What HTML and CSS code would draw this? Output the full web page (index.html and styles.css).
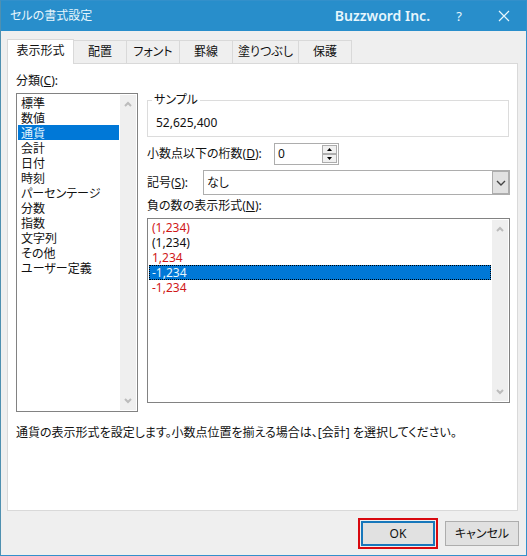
FILE: index.html
```html
<!DOCTYPE html>
<html lang="ja">
<head>
  <meta charset="UTF-8">
  <meta name="viewport" content="width=device-width, initial-scale=1.0">
  <title>セルの書式設定</title>
  <link rel="stylesheet" href="styles.css">
</head>
<body>
  <form class="dialog">
    <!-- Title bar -->
    <header class="titlebar">
      <h1 class="title">セルの書式設定</h1>
      <span class="brand">Buzzword Inc.</span>
      <button type="button" class="help" aria-label="ヘルプ">?</button>
      <button type="button" class="close" aria-label="閉じる">
        <svg width="12" height="12" viewBox="0 0 12 12"><path d="M1 1L11 11M11 1L1 11" fill="none" stroke="currentColor" stroke-width="1.2"/></svg>
      </button>
    </header>

    <!-- Tabs -->
    <nav class="tabs">
      <button type="button" class="tab active">表示形式</button>
      <button type="button" class="tab">配置</button>
      <button type="button" class="tab">フォント</button>
      <button type="button" class="tab">罫線</button>
      <button type="button" class="tab wide">塗りつぶし</button>
      <button type="button" class="tab">保護</button>
    </nav>

    <main class="panel">
      <div class="columns">
        <!-- Category -->
        <div class="category">
          <label for="category">分類(<u>C</u>):</label>
          <div class="listbox">
            <select id="category" name="category" size="12">
              <option>標準</option>
              <option>数値</option>
              <option selected>通貨</option>
              <option>会計</option>
              <option>日付</option>
              <option>時刻</option>
              <option>パーセンテージ</option>
              <option>分数</option>
              <option>指数</option>
              <option>文字列</option>
              <option>その他</option>
              <option>ユーザー定義</option>
            </select>
            <div class="scrollbar">
              <svg width="8" height="7" viewBox="0 0 8 7"><path d="M1 5L4 2L7 5" fill="none" stroke="currentColor" stroke-width="2"/></svg>
              <svg width="8" height="7" viewBox="0 0 8 7"><path d="M1 2L4 5L7 2" fill="none" stroke="currentColor" stroke-width="2"/></svg>
            </div>
          </div>
        </div>

        <!-- Currency settings -->
        <div class="settings">
          <fieldset class="sample">
            <legend>サンプル</legend>
            <output>52,625,400</output>
          </fieldset>

          <div class="row decimals">
            <label for="decimals">小数点以下の桁数(<u>D</u>):</label>
            <div class="spinner">
              <input type="number" id="decimals" name="decimals" value="0" min="0" max="30">
              <div class="steps">
                <button type="button" aria-label="増やす"><svg width="5" height="3" viewBox="0 0 5 3"><path d="M0 3L2.5 0L5 3Z"/></svg></button>
                <button type="button" aria-label="減らす"><svg width="5" height="3" viewBox="0 0 5 3"><path d="M0 0L2.5 3L5 0Z"/></svg></button>
              </div>
            </div>
          </div>

          <div class="row symbol">
            <label for="symbol">記号(<u>S</u>):</label>
            <div class="dropdown">
              <select id="symbol" name="symbol">
                <option>なし</option>
              </select>
              <span class="arrow">
                <svg width="10" height="6" viewBox="0 0 10 6"><path d="M1 1L5 5L9 1" fill="none" stroke="currentColor" stroke-width="1.4"/></svg>
              </span>
            </div>
          </div>

          <label class="negative-label" for="negative">負の数の表示形式(<u>N</u>):</label>
          <div class="listbox negative">
            <select id="negative" name="negative" size="5">
              <option class="red">(1,234)</option>
              <option>(1,234)</option>
              <option class="red">1,234</option>
              <option selected>-1,234</option>
              <option class="red">-1,234</option>
            </select>
            <div class="scrollbar">
              <svg width="8" height="7" viewBox="0 0 8 7"><path d="M1 5L4 2L7 5" fill="none" stroke="currentColor" stroke-width="2"/></svg>
              <svg width="8" height="7" viewBox="0 0 8 7"><path d="M1 2L4 5L7 2" fill="none" stroke="currentColor" stroke-width="2"/></svg>
            </div>
          </div>
        </div>
      </div>

      <p class="description">通貨の表示形式を設定します。小数点位置を揃える場合は、[会計] を選択してください。</p>
    </main>

    <!-- Buttons -->
    <footer class="buttons">
      <div class="highlight">
        <button type="submit" class="btn primary">OK</button>
      </div>
      <button type="button" class="btn">キャンセル</button>
    </footer>
  </form>
</body>
</html>
```

FILE: styles.css
```css
* {
  box-sizing: border-box;
}
body {
  margin: 0;
  font-family: "Noto Sans", "Noto Sans CJK JP", sans-serif;
  font-size: 12px;
  line-height: 16px;
  font-feature-settings: "palt";
  color: #111;
}
button, input, select {
  margin: 0;
  padding: 0;
  border: none;
  border-radius: 0;
  background: none;
  font: inherit;
  font-feature-settings: inherit;
  color: inherit;
}
svg {
  display: block;
}
.dialog {
  display: flex;
  flex-direction: column;
  min-height: 100vh;
  border: 1px solid #3390cb;
  border-left-color: #4f90b0;
  background-color: #efefef;
}

/* title bar */
.titlebar {
  display: flex;
  align-items: center;
  height: 30px;
  padding: 0 16px 0 9px;
  background-color: #288ecb;
  color: #e6f6fd;
}
.title {
  flex: 1;
  margin: 0;
  font-size: 12px;
  font-weight: normal;
}
.brand {
  font-size: 14px;
  font-weight: 600;
}
.help {
  width: 58px;
  font-size: 13px;
}
.close {
  display: flex;
  justify-content: flex-end;
  width: 22px;
}

/* tabs */
.tabs {
  display: flex;
  align-items: flex-end;
  margin-top: 8px;
  padding-left: 6px;
}
.tab {
  width: 53px;
  height: 23px;
  border: 1px solid #d9d9d9;
  border-left: none;
  border-bottom: none;
}
.tab.wide {
  width: 66px;
}
.tab.active {
  position: relative;
  width: 67px;
  height: 25px;
  margin-bottom: -1px;
  padding-bottom: 2px;
  border-left: 1px solid #d9d9d9;
  background-color: #fff;
}
.panel {
  flex: 1;
  margin: 0 8px 0 6px;
  padding: 9px 7px 0 8px;
  border: 1px solid #d9d9d9;
  background-color: #fff;
}
.columns {
  display: flex;
  gap: 9px;
}
label {
  display: block;
}

/* list boxes */
.category {
  width: 122px;
}
.listbox {
  display: flex;
  height: 319px;
  margin-top: 4px;
  padding: 1px;
  border: 1px solid #828282;
}
.listbox select {
  flex: 1;
  min-width: 0;
  overflow: hidden;
  outline: none;
}
.listbox option {
  display: flex;
  align-items: center;
  height: 15px;
  min-height: 15px;
  padding: 0 3px;
}
.listbox option:checked {
  background: linear-gradient(#0078d7, #0078d7);
  -webkit-text-fill-color: #e6f6fd;
}
.listbox option.red {
  color: #d01818;
}
.scrollbar {
  display: flex;
  flex-direction: column;
  justify-content: space-between;
  align-items: center;
  width: 16px;
  margin-left: 1px;
  padding: 6px 0;
  background-color: #efefef;
  color: #bcbcbc;
}

/* currency settings */
.settings {
  display: flex;
  flex: 1;
  flex-direction: column;
}
.sample {
  height: 45px;
  margin: 19px 1px 0 0;
  padding: 7px 8px;
  border: 1px solid #dcdcdc;
}
.sample legend {
  margin-left: -4px;
  padding: 0 2px;
}
.row {
  display: flex;
  align-items: center;
}
.decimals {
  margin-top: 6px;
}
.decimals label {
  width: 127px;
}
.spinner {
  display: flex;
  width: 65px;
  height: 22px;
  padding: 1px;
  border: 1px solid #adadad;
}
.spinner input {
  flex: 1;
  min-width: 0;
  padding-left: 2px;
  appearance: textfield;
  outline: none;
}
.spinner input::-webkit-inner-spin-button {
  display: none;
}
.steps {
  display: flex;
  flex-direction: column;
  width: 15px;
}
.steps button {
  display: flex;
  flex: 1;
  align-items: center;
  justify-content: center;
  border: 1px solid #adadad;
  background-color: #f0f0f0;
}
.symbol {
  margin-top: 5px;
}
.symbol label {
  width: 56px;
}
.dropdown {
  display: flex;
  flex: 1;
  height: 25px;
  border: 1px solid #adadad;
}
.dropdown select {
  flex: 1;
  margin-right: -17px;
  padding: 0 20px 0 3px;
  appearance: none;
}
.arrow {
  display: flex;
  align-items: center;
  justify-content: center;
  width: 17px;
  border: 1px solid #adadad;
  background-color: #e1e1e1;
  color: #444;
  pointer-events: none;
}
.negative-label {
  margin-top: 3px;
}
.listbox.negative {
  flex: 1;
  margin-bottom: 9px;
}
.negative option:checked {
  outline: 1px dotted #000;
  outline-offset: -1px;
}
.description {
  margin: 13px 0;
}

/* buttons */
.buttons {
  display: flex;
  align-items: center;
  justify-content: flex-end;
  gap: 7px;
  padding: 7px 7px 6px;
}
.btn {
  width: 74px;
  height: 25px;
  border: 1px solid #adadad;
  background-color: #e1e1e1;
}
.btn.primary {
  border: 2px solid #1677bb;
}
.highlight {
  display: flex;
  padding: 1px;
  border: 2px solid #d8090f;
}
```
